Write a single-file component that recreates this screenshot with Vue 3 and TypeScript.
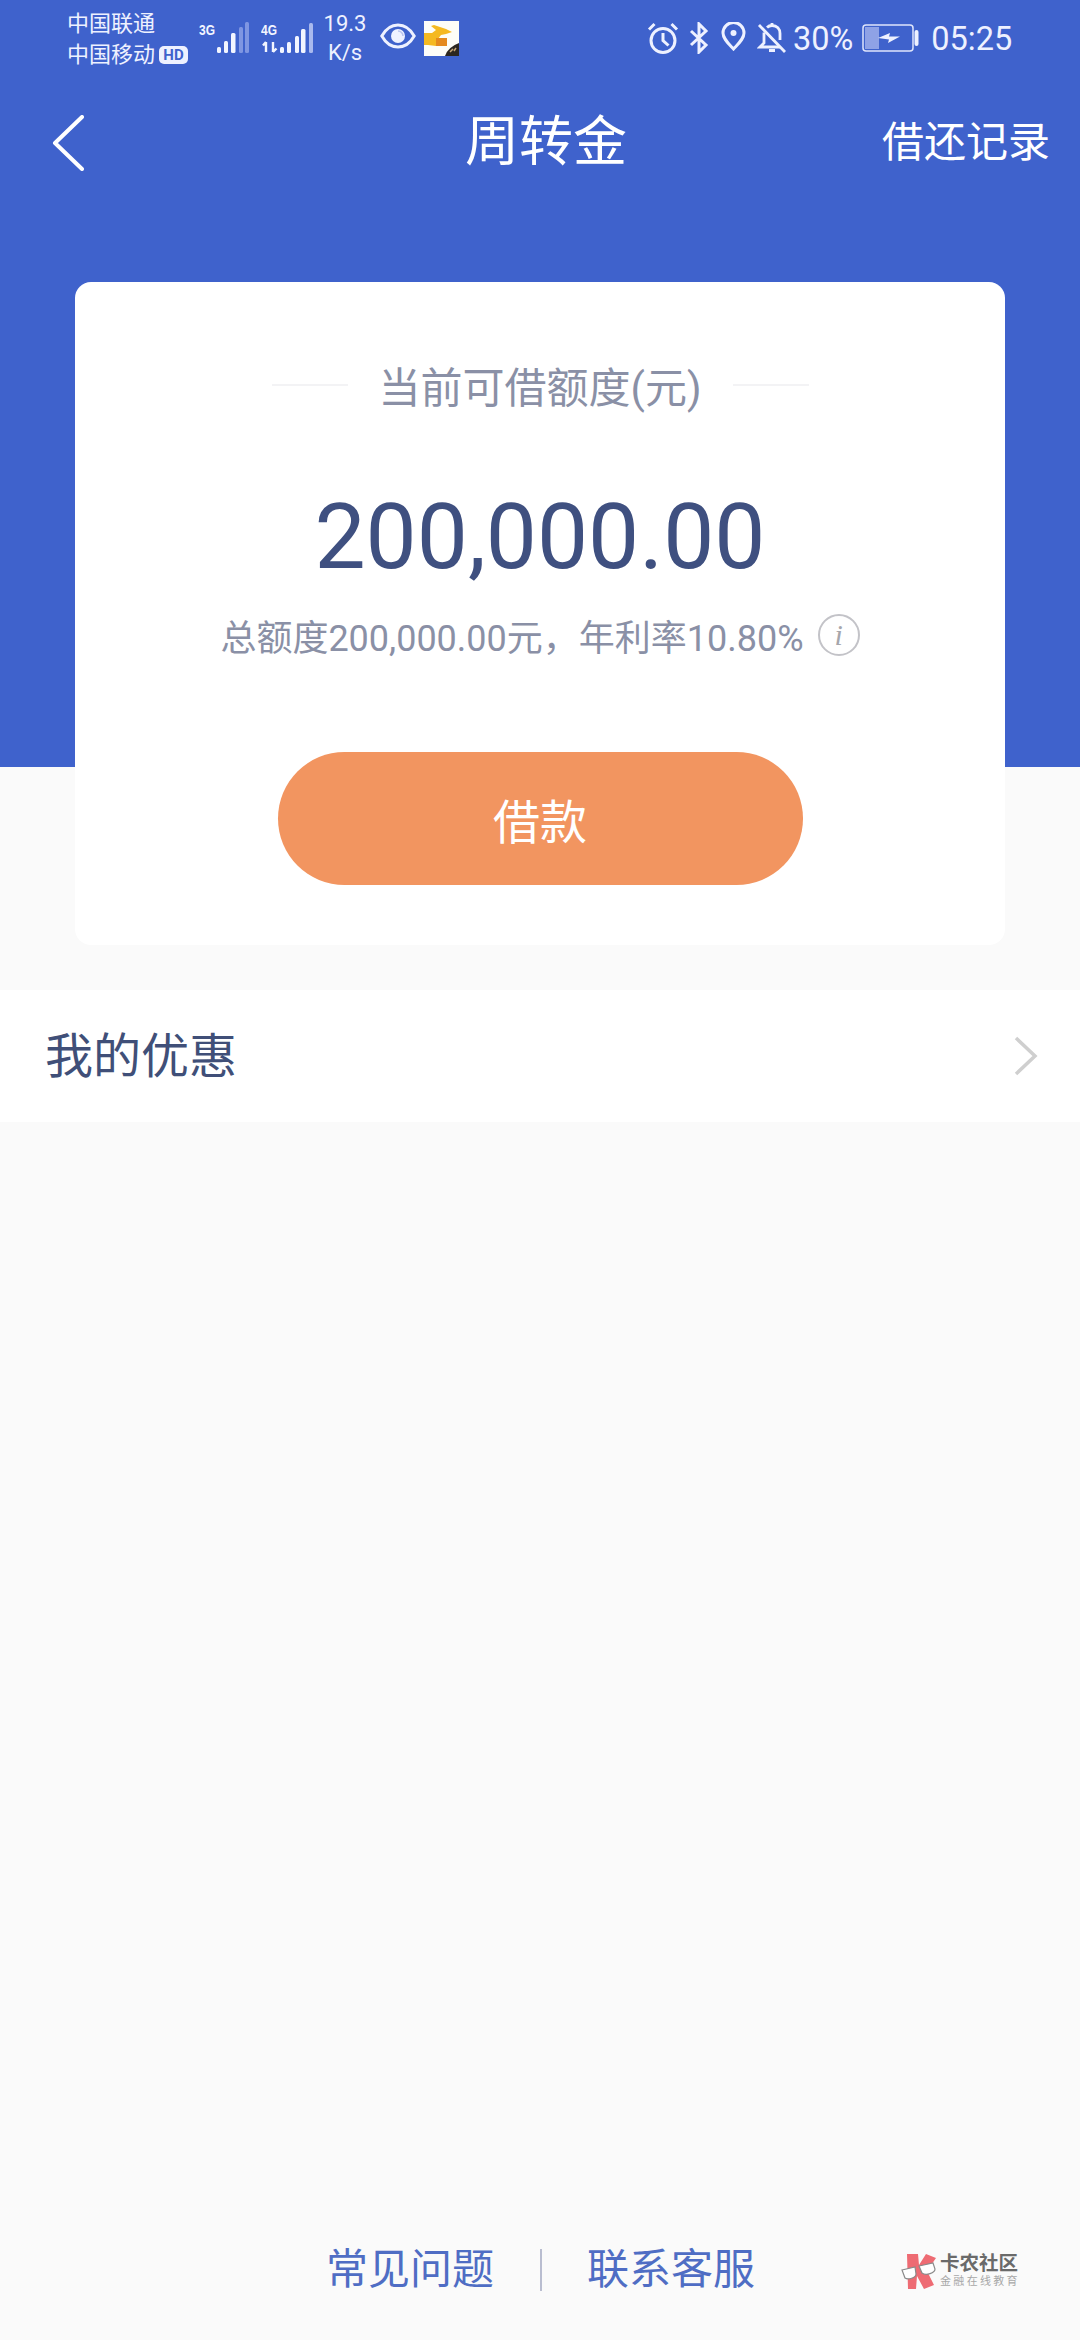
<script setup lang="ts">
interface Bar { x: number; y: number; w: number; h: number; dim?: boolean }

const bars3g: Bar[] = [
  { x: 18, y: 26, w: 4, h: 6 },
  { x: 25, y: 20, w: 4, h: 12 },
  { x: 32, y: 12, w: 4.5, h: 20 },
  { x: 40, y: 6, w: 4, h: 26, dim: true },
  { x: 46, y: 1, w: 4, h: 31, dim: true },
]
const bars4g: Bar[] = [
  { x: 19, y: 26, w: 4, h: 6 },
  { x: 26, y: 21, w: 4, h: 11 },
  { x: 34, y: 15, w: 4, h: 17 },
  { x: 40, y: 8, w: 4.5, h: 24 },
  { x: 48, y: 2, w: 4, h: 30, dim: true },
]
</script>

<template>
  <div class="page">
    <header class="hero">
      <div class="status">
        <div class="carriers">
          <span>中国联通</span>
          <span class="carrier-2">中国移动<b class="hd">HD</b></span>
        </div>
        <svg class="sig sig-a" width="52" height="34" viewBox="0 0 52 34">
          <text x="0" y="14" class="net" textLength="16" lengthAdjust="spacingAndGlyphs">3G</text>
          <rect v-for="(b, i) in bars3g" :key="i" :x="b.x" :y="b.y" :width="b.w" :height="b.h" rx="1.5"
            :fill="b.dim ? '#7f96e2' : '#f2f5ff'" />
        </svg>
        <svg class="sig sig-b" width="54" height="34" viewBox="0 0 54 34">
          <text x="0" y="14" class="net" textLength="16" lengthAdjust="spacingAndGlyphs">4G</text>
          <path d="M5 21v10M2 24.500l3-3.500M12 21v10M12 31l3.500-3.500" stroke="#f2f5ff" stroke-width="2.400" fill="none" />
          <rect v-for="(b, i) in bars4g" :key="i" :x="b.x" :y="b.y" :width="b.w" :height="b.h" rx="1.5"
            :fill="b.dim ? '#a9b9ee' : '#f2f5ff'" />
        </svg>
        <div class="speed"><span>19.3</span><span>K/s</span></div>
        <svg class="eye" width="36" height="26" viewBox="0 0 36 26">
          <path d="M1.800 13C6 5.500 11.500 2 18 2s12 3.500 16.200 11C30 20.500 24.500 24 18 24S6 20.500 1.800 13z" fill="none"
            stroke="#eef1ff" stroke-width="3" />
          <circle cx="18" cy="13" r="7" fill="#eef1ff" />
          <path d="M18 8a5 5 0 0 1 5 5" stroke="#b9c4ee" stroke-width="1.500" fill="none" />
        </svg>
        <svg class="thumb" width="35" height="35" viewBox="0 0 35 35">
          <rect width="35" height="35" fill="#fdfdf8" />
          <path d="M0 12h8l4-3-5-4 3-1 6 2 6 2 6 3-6 2-5 1-3 4-2 7-8-1H0z" fill="#f5b921" />
          <rect x="12" y="17" width="11" height="8" fill="#e58a1e" />
          <path d="M35 22v13H21q3-9 14-13z" fill="#2b2620" />
          <path d="M26 31l3-3M30 30l2-3" stroke="#c9a878" stroke-width="1.500" />
        </svg>

        <div class="status-right">
          <svg class="ic ic-alarm" width="32" height="32" viewBox="0 0 32 32" fill="none" stroke="#eef1ff" stroke-width="3">
            <circle cx="16" cy="18.500" r="12" />
            <path d="M16 11v7.500l5.500 5M2 7.500L7.500 2M30 7.500L24.500 2" />
          </svg>
          <svg class="ic ic-bt" width="20" height="32" viewBox="0 0 20 32" fill="none" stroke="#eef1ff" stroke-width="3">
            <path d="M2 9l15 14-7 7V2l7 7L2 23" />
          </svg>
          <svg class="ic ic-pin" width="25" height="29" viewBox="0 0 25 29" fill="none" stroke="#eef1ff" stroke-width="3">
            <path d="M12.500 27C7 21 2 16.500 2 11a10.500 10.500 0 0 1 21 0c0 5.500-5 10-10.500 16z" />
            <circle cx="12.500" cy="11" r="3" fill="#eef1ff" stroke="none" />
          </svg>
          <svg class="ic ic-bell" width="30" height="32" viewBox="0 0 30 32" fill="none" stroke="#eef1ff" stroke-width="2.800">
            <path d="M7 10.500V21l-4 4h20M10 5.500C11.500 4 13 3.500 15 3.500c5 0 8 3.500 8 8V18" />
            <path d="M15 1v3M12 28.500h6M2 3l26 27" />
          </svg>
          <span class="pct">30%</span>
          <svg class="batt" width="59" height="28" viewBox="0 0 59 28" fill="none">
            <rect x="1" y="1" width="50" height="26" rx="3" stroke="#dfe5fb" stroke-width="1.500" />
            <rect x="3" y="3" width="14" height="22" fill="#8fa2e6" />
            <path d="M54.500 8v12" stroke="#eef1ff" stroke-width="4" stroke-linecap="round" />
            <path d="M16 14l12-5-1 3.500h11L26 19l1-3.500z" fill="#eef1ff" />
          </svg>
          <span class="time">05:25</span>
        </div>
      </div>

      <nav class="nav">
        <svg class="back" width="32" height="56" viewBox="0 0 32 56" fill="none">
          <path d="M30 2L3 28l27 26" stroke="#fff" stroke-width="4" stroke-linecap="round" stroke-linejoin="round" />
        </svg>
        <h1 class="title">周转金</h1>
        <a class="records">借还记录</a>
      </nav>

      <section class="card">
        <div class="label-row">
          <i class="rule"></i>
          <span class="label">当前可借额度(元)</span>
          <i class="rule"></i>
        </div>
        <div class="amount">200,000.00</div>
        <div class="sub">
          <span>总额度200,000.00元，年利率10.80%</span>
          <span class="info">i</span>
        </div>
        <button class="borrow" type="button">借款</button>
      </section>
    </header>

    <div class="row">
      <span>我的优惠</span>
      <svg class="chev" width="24" height="40" viewBox="0 0 24 40" fill="none">
        <path d="M2 2l19 18L2 38" stroke="#cfcfcf" stroke-width="3.500" />
      </svg>
    </div>

    <footer class="footer">
      <a class="link">常见问题</a>
      <i class="divider"></i>
      <a class="link">联系客服</a>
      <div class="logo">
        <svg width="38" height="36" viewBox="0 0 38 36">
          <path d="M6 1h11l1 11 7-11 10 4-9 13 7 14-10 4-7-13-1 13H7z" fill="#ee6b73" />
          <path d="M1 17l13-3 1 7c0 4-8 6-11 4zM18 13l14-3 2 6c0 4-9 7-13 4z" fill="#fff" stroke="#8a8a8a" stroke-width="1.200" />
        </svg>
        <div class="logo-text">
          <span class="logo-a">卡农社区</span>
          <span class="logo-b">金融在线教育</span>
        </div>
      </div>
    </footer>
  </div>
</template>

<style scoped>
.page {
  width: 1080px;
  height: 2340px;
  overflow: hidden;
  display: flex;
  flex-direction: column;
  background: #fafafa;
  font-family: Roboto, "Noto Sans CJK SC", sans-serif;
}
.hero {
  height: 767px;
  flex: none;
  background: #3f62cc;
}
.status {
  height: 80px;
  display: flex;
  align-items: flex-start;
  color: #eef1ff;
  position: relative;
}
.carriers {
  width: 125px;
  margin: 8px 0 0 67px;
  display: flex;
  flex-direction: column;
  font-size: 22px;
  line-height: 31px;
  flex: none;
}
.carrier-2 {
  display: flex;
  align-items: center;
}
.hd {
  margin-left: 4px;
  width: 29px;
  height: 18px;
  border-radius: 5px;
  background: #eef1ff;
  color: #3f62cc;
  font-size: 15px;
  line-height: 18px;
  font-weight: 700;
  text-align: center;
}
.sig {
  flex: none;
  margin-top: 21px;
}
.sig-a {
  margin-left: 7px;
}
.sig-b {
  margin-left: 10px;
}
.net {
  font-family: "Liberation Sans", sans-serif;
  font-size: 15px;
  font-weight: 700;
  fill: #f2f5ff;
}
.speed {
  width: 50px;
  margin: 9px 0 0 5px;
  display: flex;
  flex-direction: column;
  align-items: center;
  font-size: 22px;
  line-height: 29px;
  flex: none;
}
.eye {
  flex: none;
  margin: 23px 0 0 10px;
}
.thumb {
  flex: none;
  margin: 21px 0 0 8px;
}
.status-right {
  display: flex;
  align-items: flex-start;
  margin-left: 188px;
}
.ic {
  flex: none;
  margin-top: 22px;
}
.ic-bt {
  margin-left: 10px;
}
.ic-pin {
  margin-left: 12px;
}
.ic-bell {
  margin-left: 11px;
}
.pct,
.time {
  font-size: 32.5px;
  line-height: 38px;
  margin-top: 20px;
  flex: none;
}
.pct {
  margin-left: 6px;
}
.batt {
  flex: none;
  margin: 24px 0 0 9px;
}
.time {
  margin-left: 10px;
}

.nav {
  height: 126px;
  display: grid;
  grid-template-columns: 1fr auto 1fr;
  align-items: center;
  padding: 0 30px 0 42px;
  color: #fff;
}
.back {
  margin-left: 10px;
}
.title {
  margin: 0;
  font-size: 54px;
  font-weight: 400;
  line-height: 70px;
}
.records {
  justify-self: end;
  font-size: 42px;
  line-height: 60px;
}

.card {
  width: 930px;
  height: 663px;
  box-sizing: border-box;
  margin: 76px 0 0 75px;
  padding-top: 77px;
  background: #fff;
  border-radius: 16px;
  display: flex;
  flex-direction: column;
  align-items: center;
}
.label-row {
  display: flex;
  align-items: center;
  gap: 31px;
  height: 60px;
}
.rule {
  width: 76px;
  height: 1.500px;
  background: #f3f3f5;
  margin-top: -8px;
}
.label {
  font-size: 42px;
  line-height: 60px;
  color: #8a90a6;
}
.amount {
  margin-top: 68px;
  font-size: 91px;
  line-height: 100px;
  color: #3f5080;
}
.sub {
  margin-top: 23px;
  height: 50px;
  display: flex;
  align-items: center;
  gap: 14px;
  font-size: 36px;
  color: #8a90a6;
}
.info {
  width: 38px;
  height: 38px;
  border: 2.500px solid #c3c3c8;
  border-radius: 50%;
  display: flex;
  align-items: center;
  justify-content: center;
  font-family: "Liberation Serif", serif;
  font-style: italic;
  font-size: 30px;
  color: #a6a6ac;
}
.borrow {
  margin-top: 92px;
  width: 525px;
  height: 133px;
  border: 0;
  border-radius: 67px;
  background: #f29560;
  color: #fff;
  font-family: inherit;
  font-size: 47px;
  padding: 0;
}

.row {
  flex: none;
  margin-top: 223px;
  height: 132px;
  box-sizing: border-box;
  padding: 0 42px 8px 45px;
  background: #fff;
  display: flex;
  align-items: center;
  justify-content: space-between;
  font-size: 48px;
  color: #404f78;
}
.chev {
  margin-top: 8px;
}

.footer {
  margin-top: auto;
  height: 56px;
  margin-bottom: 42px;
  padding-left: 326px;
  display: flex;
  align-items: center;
}
.link {
  font-size: 42px;
  line-height: 56px;
  color: #4f6dc4;
}
.divider {
  width: 2px;
  height: 42px;
  margin: 0 45px 0 46px;
  background: #b9bdd0;
}
.logo {
  margin: 2px 0 0 146px;
  display: flex;
  align-items: center;
  gap: 1px;
}
.logo-text {
  display: flex;
  flex-direction: column;
}
.logo-a {
  font-size: 19.500px;
  line-height: 22px;
  font-weight: 700;
  color: #6a6a6a;
}
.logo-b {
  font-size: 11px;
  line-height: 14px;
  letter-spacing: 2.300px;
  color: #a8a8a8;
}
</style>
